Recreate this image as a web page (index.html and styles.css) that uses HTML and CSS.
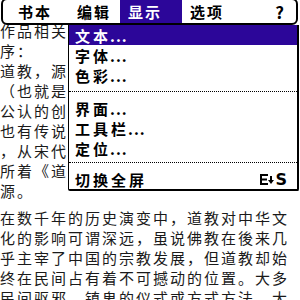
FILE: index.html
```html
<!DOCTYPE html>
<html lang="zh-CN">
<head>
    <meta charset="UTF-8">
    <meta name="viewport" content="width=device-width, initial-scale=1.0">
    <title>阅读器 - 显示菜单</title>
    <link rel="stylesheet" href="styles.css">
</head>
<body>

<div class="screen">

    <!-- Book text -->
    <div class="reader">
        <div class="para">
            <p class="line">作品相关</p>
            <p class="line">序：</p>
            <p class="line">道教，源于古代的巫术和神仙方术，是</p>
            <p class="line">（也就是方仙道与黄老道），一般被人</p>
            <p class="line">公认的创立者是东汉时期的张道陵，当</p>
            <p class="line">也有传说认为老子是道教的始祖。另外</p>
            <p class="line">，从宋代开始也有人将东晋的葛洪及其</p>
            <p class="line">所着《道德经》之外的典籍视为道教之</p>
            <p class="line">源。</p>
        </div>
        <div class="para">
            <p class="line">在数千年的历史演变中，道教对中华文</p>
            <p class="line">化的影响可谓深远，虽说佛教在後来几</p>
            <p class="line">乎主宰了中国的宗教发展，但道教却始</p>
            <p class="line">终在民间占有着不可撼动的位置。大多</p>
            <p class="line">民间驱邪、镇鬼的仪式或方式方法，大</p>
        </div>
    </div>

    <!-- Menu bar -->
    <div class="menubar">
        <span class="menu book">书本</span>
        <span class="menu edit">编辑</span>
        <span class="menu view active">显示</span>
        <span class="menu">选项</span>
        <span class="menu help">?</span>
    </div>

    <!-- Display menu -->
    <div class="dropdown">
        <div class="item selected">文本<span class="dots">...</span></div>
        <div class="item">字体<span class="dots">...</span></div>
        <div class="item">色彩<span class="dots">...</span></div>
        <div class="sep"></div>
        <div class="item">界面<span class="dots">...</span></div>
        <div class="item">工具栏<span class="dots">...</span></div>
        <div class="item">定位<span class="dots">...</span></div>
        <div class="sep sep-last"></div>
        <div class="item">
            <span>切换全屏</span>
            <span class="shortcut">
                <svg width="14" height="11" viewBox="0 0 14 11">
                    <path d="M0 0h8v2H2v2.5h5v2H2V9h6v2H0z" fill="#000"/>
                    <path d="M10 2h2v4h2l-3 4-3-4h2z" fill="#000"/>
                </svg>
                <span class="key">S</span>
            </span>
        </div>
    </div>

</div>

</body>
</html>
```

FILE: styles.css
```css
html, body {
    margin: 0;
    padding: 0;
    background: #fff;
}
.screen {
    position: relative;
    width: 300px;
    height: 300px;
    overflow: hidden;
    background: #fff;
    font-family: "Noto Sans CJK SC", "Noto Sans", sans-serif;
}

/* book text */
.reader {
    padding-top: 21px;
    color: #1a1a1a;
    font-size: 15px;
    letter-spacing: 2px;
}
.para + .para {
    margin-top: 7px;
}
.line {
    margin: 0;
    height: 20px;
    line-height: 20px;
    white-space: nowrap;
}

/* menu bar */
.menubar {
    position: absolute;
    top: -2px;
    left: 1px;
    width: 297px;
    height: 27px;
    box-sizing: border-box;
    border: 2px solid #000;
    border-radius: 6px;
    background: #fff;
    display: flex;
    padding-left: 7px;
    font-size: 15px;
    font-weight: bold;
    letter-spacing: 2px;
}
.menu {
    padding: 0 8px;
    line-height: 23px;
    color: #000;
}
.menu.book {
    padding-right: 17px;
}
.menu.edit {
    padding-right: 9px;
}
.menu.view {
    padding-right: 20px;
}
.menu.active {
    background: #2c0699;
    color: #fff;
}
.menu.help {
    margin-left: auto;
    padding-right: 10px;
    font-size: 17px;
}

/* dropdown */
.dropdown {
    position: absolute;
    top: 25px;
    left: 68px;
    width: 231px;
    box-sizing: border-box;
    background: #fff;
    border-left: 1px solid #000;
    border-right: 2px solid #000;
    border-bottom: 2px solid #000;
    border-bottom-left-radius: 2px;
    border-bottom-right-radius: 2px;
    font-size: 15px;
    font-weight: bold;
    letter-spacing: 3px;
}
.item {
    display: flex;
    align-items: center;
    height: 20px;
    padding: 0 6px;
    color: #000;
}
.item.selected {
    background: #2c0699;
    color: #fff;
}
.dots {
    letter-spacing: 1px;
    margin-left: -1px;
}
.sep {
    height: 13px;
    box-sizing: border-box;
    padding-top: 6px;
}
.sep::before {
    content: "";
    display: block;
    border-top: 1px dotted #000;
}
.sep-last {
    height: 11px;
    padding-top: 4px;
}
.shortcut {
    margin-left: auto;
    margin-right: 4px;
    display: flex;
    align-items: center;
    gap: 1px;
}
.key {
    font-family: "DejaVu Sans", sans-serif;
    font-size: 16px;
    letter-spacing: 0;
    line-height: 11px;
}
```
